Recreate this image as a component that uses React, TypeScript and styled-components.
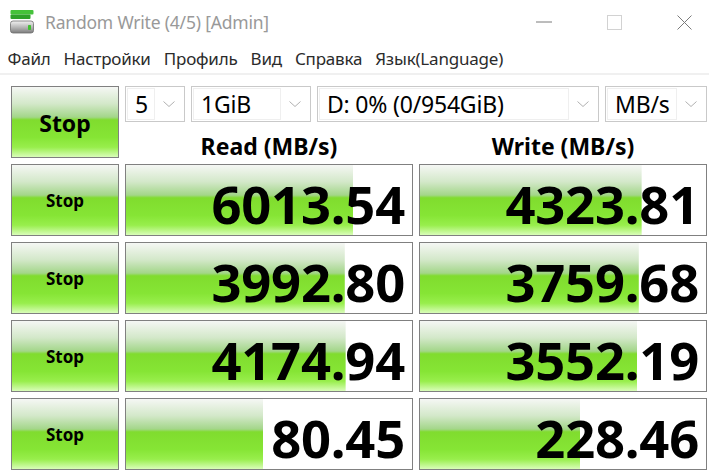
import React from "react";
import styled, { createGlobalStyle } from "styled-components";

// glass-like green gradient used by buttons and score bars
const GREEN = `linear-gradient(to bottom, #f5f7f4 0%, #d3e8c9 24%, #a3d689 43%, #80dc2e 47%, #86e535 72%, #98ee4c 86%, #d9fdb9 100%)`;

type Score = { value: string; fill: number };
type Row = { read: Score; write: Score };

const rows: Row[] = [
  { read: { value: "6013.54", fill: 79.5 }, write: { value: "4323.81", fill: 77.5 } },
  { read: { value: "3992.80", fill: 76.5 }, write: { value: "3759.68", fill: 76.5 } },
  { read: { value: "4174.94", fill: 76.8 }, write: { value: "3552.19", fill: 76 } },
  { read: { value: "80.45", fill: 48 }, write: { value: "228.46", fill: 56 } },
];

const GlobalStyle = createGlobalStyle`
  html, body { margin: 0; padding: 0; background: #fff; }
  body { font-family: "Noto Sans", "Open Sans", sans-serif; }
`;

const Window = styled.div`
  width: 709px;
  height: 474px;
  overflow: hidden;
  background: #fff;
`;

const TitleBar = styled.div`
  display: flex;
  align-items: center;
  height: 44px;
  padding-left: 10px;
`;

const Title = styled.span`
  margin-left: 11px;
  font-size: 17.5px;
  color: #999;
  letter-spacing: -0.2px;
`;

const Controls = styled.div`
  margin-left: auto;
  display: flex;
  align-items: center;
  gap: 24px;
  padding-right: 2px;
`;

const CtlBtn = styled.div`
  width: 46px;
  height: 44px;
  display: flex;
  align-items: center;
  justify-content: center;
`;

const MenuBar = styled.div`
  display: flex;
  height: 29px;
  align-items: center;
  border-bottom: 2px solid #f0f0f0;
  padding-left: 1px;
`;

const MenuItem = styled.span`
  padding: 0 6.5px;
  font-size: 17px;
  color: #2b2b2b;
  letter-spacing: -0.2px;
`;

const Body = styled.div`
  display: grid;
  grid-template-columns: 108px 288px 288px;
  grid-auto-rows: 72px;
  gap: 6px;
  padding: 11px 0 0 11px;
`;

const StopButton = styled.div<{ $big?: boolean }>`
  box-sizing: border-box;
  border: 1px solid #808080;
  background: ${GREEN};
  display: flex;
  align-items: center;
  justify-content: center;
  font-weight: 700;
  font-size: ${(p) => (p.$big ? "23px" : "17px")};
  color: #000;
  padding-top: ${(p) => (p.$big ? "2px" : "0")};
`;

const Panel = styled.div`
  grid-column: 2 / span 2;
  display: flex;
  flex-direction: column;
`;

const ComboRow = styled.div`
  display: flex;
  gap: 6px;
  height: 36px;
`;

const Combo = styled.div<{ $w: number }>`
  box-sizing: border-box;
  width: ${(p) => p.$w}px;
  border: 1px solid #c9c9c9;
  padding: 1px;
  display: flex;
  background: #fff;
`;

const ComboText = styled.div`
  box-sizing: border-box;
  flex: 1;
  border: 1px solid #efefef;
  display: flex;
  align-items: center;
  padding-left: 7px;
  font-size: 23px;
  color: #000;
  letter-spacing: -0.2px;
  white-space: nowrap;
  overflow: hidden;
`;

const ComboArrow = styled.div`
  width: 28px;
  display: flex;
  align-items: center;
  justify-content: center;
`;

const Headers = styled.div`
  display: grid;
  grid-template-columns: 288px 288px;
  gap: 6px;
  height: 36px;
`;

const Header = styled.div`
  text-align: center;
  font-weight: 700;
  font-size: 23px;
  line-height: 28px;
  padding-top: 10px;
  color: #000;
`;

const Cell = styled.div<{ $fill: number }>`
  box-sizing: border-box;
  border: 1px solid #808080;
  background-color: #fff;
  background-image: ${GREEN};
  background-repeat: no-repeat;
  background-size: ${(p) => p.$fill}% 100%;
  display: flex;
  align-items: center;
  justify-content: flex-end;
  padding: 6px 7px 0 0;
  font-weight: 700;
  font-size: 52.5px;
  letter-spacing: -0.2px;
  color: #000;
`;

function AppIcon() {
  return (
    <svg width="24" height="24" viewBox="0 0 24 24">
      <defs>
        <linearGradient id="drive" x1="0" y1="0" x2="0" y2="1">
          <stop offset="0" stopColor="#f2f2f2" />
          <stop offset="0.5" stopColor="#b9b9b9" />
          <stop offset="1" stopColor="#7d7d7d" />
        </linearGradient>
      </defs>
      <rect x="0.5" y="0" width="23" height="4.5" rx="1" fill="#45c23a" />
      <rect x="0.5" y="4.5" width="20" height="4.5" rx="1" fill="#2ea22a" />
      <rect x="0.5" y="11" width="23" height="12" rx="2.5" fill="url(#drive)" stroke="#6f6f6f" strokeWidth="0.8" />
      <rect x="18" y="15" width="3" height="5" rx="0.8" fill="#3fbf30" />
    </svg>
  );
}

function Chevron() {
  return (
    <svg width="12" height="6" viewBox="0 0 12 6">
      <path d="M0.5 0.5 L6 5.5 L11.5 0.5" fill="none" stroke="#b0b0b0" strokeWidth="1" />
    </svg>
  );
}

export default function App() {
  const menu = ["Файл", "Настройки", "Профиль", "Вид", "Справка", "Язык(Language)"];
  const combos = [
    { w: 60, text: "5" },
    { w: 120, text: "1GiB" },
    { w: 282, text: "D: 0% (0/954GiB)" },
    { w: 102, text: "MB/s" },
  ];

  return (
    <Window>
      <GlobalStyle />
      <TitleBar>
        <AppIcon />
        <Title>Random Write (4/5) [Admin]</Title>
        <Controls>
          <CtlBtn>
            <svg width="16" height="2" viewBox="0 0 16 2">
              <line x1="0" y1="1" x2="16" y2="1" stroke="#7a7a7a" strokeWidth="1" />
            </svg>
          </CtlBtn>
          <CtlBtn>
            <svg width="15" height="15" viewBox="0 0 15 15">
              <rect x="0.5" y="0.5" width="14" height="14" fill="none" stroke="#d2d2d2" strokeWidth="1" />
            </svg>
          </CtlBtn>
          <CtlBtn>
            <svg width="15" height="15" viewBox="0 0 15 15">
              <path d="M0.5 0.5 L14.5 14.5 M14.5 0.5 L0.5 14.5" stroke="#7a7a7a" strokeWidth="1" />
            </svg>
          </CtlBtn>
        </Controls>
      </TitleBar>
      <MenuBar>
        {menu.map((m) => (
          <MenuItem key={m}>{m}</MenuItem>
        ))}
      </MenuBar>
      <Body>
        <StopButton $big>Stop</StopButton>
        <Panel>
          <ComboRow>
            {combos.map((c) => (
              <Combo key={c.text} $w={c.w}>
                <ComboText>{c.text}</ComboText>
                <ComboArrow>
                  <Chevron />
                </ComboArrow>
              </Combo>
            ))}
          </ComboRow>
          <Headers>
            <Header>Read (MB/s)</Header>
            <Header>Write (MB/s)</Header>
          </Headers>
        </Panel>
        {rows.map((r, i) => (
          <React.Fragment key={i}>
            <StopButton>Stop</StopButton>
            <Cell $fill={r.read.fill}>{r.read.value}</Cell>
            <Cell $fill={r.write.fill}>{r.write.value}</Cell>
          </React.Fragment>
        ))}
      </Body>
    </Window>
  );
}
